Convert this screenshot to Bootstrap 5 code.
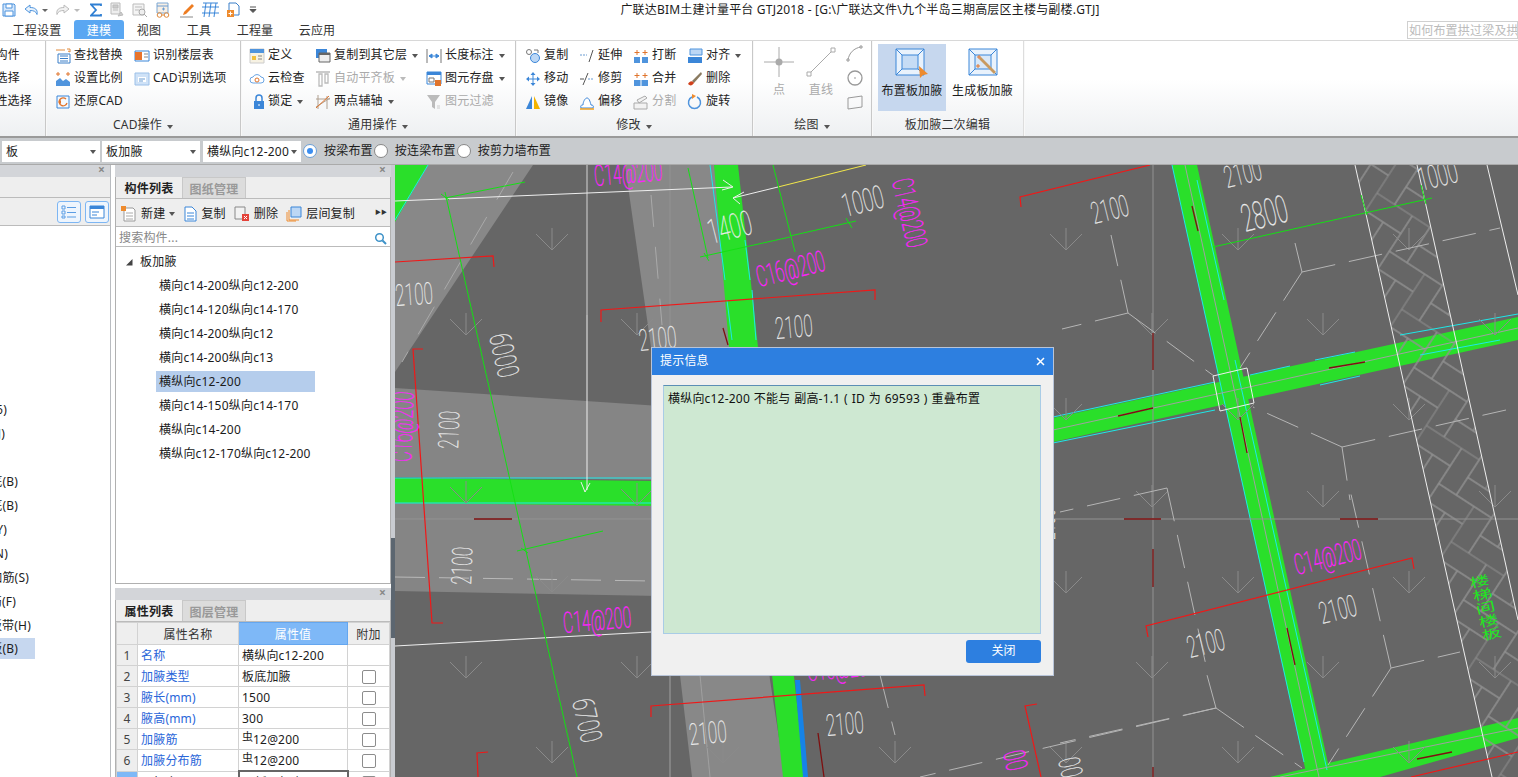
<!DOCTYPE html>
<html lang="zh">
<head>
<meta charset="UTF-8">
<title>广联达BIM土建计量平台 GTJ2018</title>
<link href="https://cdn.jsdelivr.net/npm/bootstrap@5.3.0/dist/css/bootstrap.min.css" rel="stylesheet">
<style>
html,body{height:777px;overflow:hidden}
body{position:relative;background:#fff;color:#1c1c1c;font:12px/1.2 "Noto Sans","Noto Sans CJK SC",sans-serif;letter-spacing:.2px}
svg{display:block;flex:none}
.qbar{height:20px;padding-left:2px;gap:7px}
.apptitle{position:absolute;left:0;right:0;top:3px;text-align:center;padding-left:202px;font-size:12px}
.tabbar{height:20px}
.rtab{height:19px;line-height:21px;text-align:center;color:#333}
.rtab.on{background:#5aa7f2;color:#fff;border-radius:3px 3px 0 0}
.t1{width:74px}.t2{width:50px}.t3{width:50px}.t4{width:50px}.t5{width:62px}.t6{width:62px}
.helpbox{position:absolute;left:1407px;top:21px;width:111px;height:18px;border:1px solid #d0d0d0;color:#bbb;padding:2px 0 0 1px;white-space:nowrap;overflow:hidden}
.ribbon{height:98px;border-top:1px solid #d8d8d8;border-bottom:2px solid #9a9a9a;background:linear-gradient(#fff 40%,#eef0f2)}
.rgroup{height:95px;border-right:1px solid #c8c8c8;box-shadow:1px 0 0 #f8f8f8}
.rgroup:last-child{border-right:1px solid #ddd}
.rbody{height:77px;padding-top:3px}
.rfoot{height:18px;text-align:center;color:#333}
.g1{width:46px}.g2{width:195px}.g3{width:275px}.g4{width:237px}.g5{width:119px}.g6{width:152px}
.g2 .rbody{padding-left:9px}.g3 .rbody{padding-left:8px}.g4 .rbody{padding-left:9px}.g5 .rbody{padding-left:5px}.g6 .rbody{padding-left:6px}
.c54{width:54px}.c66{width:66px}.c79{width:79px}.c111{width:111px}
.ritem{height:23px;gap:3px;white-space:nowrap;color:#222}
.ritem.off,.rbig.off{color:#aaa}
.shift{padding-left:4px;gap:3px}
.cut{height:23px;line-height:22px;overflow:hidden;white-space:nowrap;text-align:right;direction:rtl}
.e20{width:20px}.e32{width:32px}
.caret{width:0;height:0;border:3.5px solid transparent;border-top:4px solid #555;border-bottom:0;margin-left:5px;display:inline-block}
.caret.off{border-top-color:#bbb}
.ritem .caret{margin-left:2px}
.rbig{height:67px;padding-top:3px;text-align:center;white-space:nowrap}
.rbig.on{background:#c6d7ee}
.biglabel{padding-top:6px}
.bw29{width:42px}.bw68{width:68px}.bw73{width:73px}
.smallicons{padding-top:1px}
.smallicons svg+svg{margin-top:6px}
.optbar{height:27px;background:#c8cbce;border-bottom:1px solid #aaa;padding:3px 0 0 2px}
.pick{height:21px;width:98px;background:#fff;margin-right:2px;padding:1px 4px 0;justify-content:space-between}
.pick:nth-child(2){margin-right:3px}
.rd{width:14px;height:14px;border-radius:50%;border:1px solid #888;background:#fff;flex:none;position:relative}
.rd.sel{border-color:#6a9fd8}
.rd.sel::after{content:"";position:absolute;left:3px;top:3px;width:6px;height:6px;border-radius:50%;background:#3c8ef0}
.rdlabel{padding:1px 1px 0 7px;white-space:nowrap}
.work{height:612px}
.sidel{width:111px;border-right:1px solid #b9bcc0}
.sidem{width:276px;margin-left:4px}
.splitter{width:4px;background:#c9ccd1}
.splitter i{display:block;height:100px;margin-top:373px;background:#5c6670}
.ptitle{height:12px;background:#d3d5d9;position:relative}
.ptitle span{position:absolute;right:5px;top:-2px;font-size:12px;color:#888;font-weight:700}
.lrow{height:21px;background:#eee;border-bottom:1px solid #bbb}
.ltool{height:28px;background:#eee;border-bottom:1px solid #bbb;padding:3px 1px 0 0;gap:4px}
.tglbtn{width:24px;height:22px;border:1px solid #7db6f3;border-radius:3px;background:#eef5fd}
.llist{padding-top:172px}
.litem{height:24px;line-height:24px;overflow:hidden;white-space:nowrap;direction:rtl}
.litem.sel{width:35px;background:#c6d7ef;height:21px;line-height:22px}
.litem.sel span{margin-right:auto;overflow:hidden}
.e5{width:5px}.e7{width:7px}.e8{width:8px}.e16{width:16px}.e18{width:18px}.e29{width:29px}.e31{width:31px}.e35{width:35px}
.ptabs{height:22px;background:#eee;border-bottom:1px solid #bbb;padding-left:1px}
.ptab{width:64px;height:21px;line-height:24px;text-align:center;font-weight:700;color:#222}
.ptab.idle{background:#dcdcdc;color:#999;border:1px solid #c8c8c8;border-bottom:0;margin-left:1px;font-weight:700}
.toolrow{height:28px;background:#eee;border-bottom:1px solid #bbb;padding:3px 0 0 5px;white-space:nowrap;position:relative}
.tb{gap:4px;margin-right:8px}
.tb .caret{margin-left:0}
.more{position:absolute;right:3px;top:10px;font-size:6px;letter-spacing:0;color:#333}
.searchrow{height:20px;padding:3px 3px 0;color:#888;border-bottom:1px solid #bbb;justify-content:space-between}
.treebox{height:337px;border:1px solid #b0b0b0;border-top:0;padding-top:3px;margin-bottom:4px}
.upper{border-left:1px solid #b0b0b0;border-right:1px solid #b0b0b0}
.treeitem{height:24px;padding-left:43px;line-height:24px}
.treeroot{padding-left:10px;gap:7px}
.treeitem.sel{padding-top:1px}
.treeitem.sel span{display:block;width:159px;height:21px;margin-left:-3px;padding-left:3px;line-height:21px;background:#b5cdec}
.proptab{width:100%;border-collapse:collapse;table-layout:fixed;margin:0}
.proptab td,.proptab th{height:21px;padding:1px 3px 0;border:1px solid #d2d2d2;font-weight:400;white-space:nowrap;overflow:hidden;line-height:19px}
.proptab th{text-align:center;background:#eee;color:#333;padding-top:2px}
.proptab .valh{background:#7eb8f7;color:#fff;border:1px solid #64a6ef}
.proptab .num{text-align:center;background:#eee;color:#444}
.proptab .numon{background:#7eb8f7}
.proptab .bl{color:#2a66d9;padding-left:3px}
.proptab .cur{border:2px solid #666}
.bw{width:21px}.nw{width:101px}.vw{width:109px}
.cbx{display:block;width:14px;height:14px;margin:0 auto;border:1px solid #8c8c8c;border-radius:2px;background:#fff}
.steel{font-size:11px;line-height:0;vertical-align:3px;letter-spacing:0}
.canvas{flex:1;background:#666;overflow:hidden}
.dim{font-family:Roboto,"Liberation Sans",sans-serif;font-weight:100;font-size:20px;fill:#ececec;stroke:#ececec;stroke-width:.18}
.mg{font-family:Roboto,"Liberation Sans",sans-serif;font-weight:100;font-size:20px;fill:#ff1eff;stroke:#ff1eff;stroke-width:.35}
.gt{font-family:"Noto Sans CJK SC",sans-serif;font-size:14px;fill:#22e622}
.msgdlg{position:absolute;left:651px;top:347px;width:403px;height:329px;background:#f0f0f0;border:1px solid #b8c4d8}
.msghead{height:27px;background:#2d7fe0;color:#fff;padding:0 8px}
.msgbody{margin:10px 12px 6px 11px;height:249px;background:#cee8d2;border:1px solid #a9cce6;border-top-color:#5b8fb5;padding:6px 4px 4px;color:#111;word-spacing:.5px}
.closebtn{width:75px;height:23px;background:#2d7fe0;color:#fff;border:0;border-radius:3px;font-size:12px;margin-right:12px;padding:0}
</style>
</head>
<body>
<!-- quick access bar -->
<div class="qbar d-flex align-items-center">
  <svg width="14" height="14" viewBox="0 0 14 14"><path d="M1 1h11l1 1v11H1z" fill="#d5e7fb" stroke="#4f94dd"/><path d="M4 1h6v4H4zM3 8h8v5H3z" fill="#fff" stroke="#4f94dd"/></svg>
  <svg width="25" height="14" viewBox="0 0 25 14"><path d="M7 2L2 6l5 4V7.500c4 0 6 1 7 4 1-5-2-7-7-7z" fill="#e8f2fc" stroke="#4f94dd"/><path d="M19 6h6l-3 3z" fill="#666"/></svg>
  <svg width="28" height="14" viewBox="0 0 28 14"><path d="M9 2l5 4-5 4V7.500c-4 0-6 1-7 4-1-5 2-7 7-7z" fill="#f2f2f2" stroke="#bbb"/><path d="M19 6h6l-3 3z" fill="#bbb"/></svg>
  <svg width="12" height="14" viewBox="0 0 12 14"><path d="M11 3V1.500H1L6 7l-5 5.500h10V11" fill="none" stroke="#2f7fd3" stroke-width="1.800"/></svg>
  <svg width="16" height="16" viewBox="0 0 16 16"><path d="M2 1h9v11H2z" fill="#eee" stroke="#bbb"/><path d="M4 3h5v3H4zM4 8h5M9 14l5-1-2-3z" fill="#ccc" stroke="#bbb"/></svg>
  <svg width="16" height="16" viewBox="0 0 16 16"><path d="M1 2h11v11H1z" fill="#f4f4f4" stroke="#bbb"/><path d="M3 5h7M3 8h4" stroke="#bbb"/><circle cx="10" cy="10" r="3" fill="#eee" stroke="#aaa"/><path d="M12 12l3 3" stroke="#aaa"/></svg>
  <svg width="17" height="16" viewBox="0 0 17 16"><path d="M2 1h11v10H2z" fill="#f8efe4" stroke="#7da8d4"/><path d="M2 4h11M7 7h3M8.500 5.500v3" stroke="#6a9cd2" fill="none"/><circle cx="4.500" cy="13" r="2.300" fill="none" stroke="#e08a3c"/><circle cx="11.500" cy="13" r="2.300" fill="none" stroke="#e08a3c"/><path d="M7 13h2" stroke="#e08a3c"/></svg>
  <svg width="16" height="16" viewBox="0 0 16 16"><path d="M5 10L13 2l2 2-8 8-3 1z" fill="#ee7d22"/><path d="M1 15h13" stroke="#888"/></svg>
  <svg width="17" height="16" viewBox="0 0 17 16"><path d="M4 1L2 15M9 1L7 15M14 1l-2 14M0 5h17M0 11h17M1 1h15" fill="none" stroke="#3b86d8"/></svg>
  <svg width="16" height="16" viewBox="0 0 16 16"><path d="M3 1h7l3 3v9H3z" fill="#fff" stroke="#3b7fc8"/><path d="M1 8h7v7H1z" fill="#ee8b2e"/><path d="M4.500 9.500v4M2.500 11.500h4" stroke="#fff"/></svg>
  <svg width="8" height="10" viewBox="0 0 8 10"><path d="M1 2h6M1 4.500h6l-3 3z" stroke="#555" fill="#555"/></svg>
</div>
<div class="apptitle">广联达BIM土建计量平台 GTJ2018 - [G:\广联达文件\九个半岛三期高层区主楼与副楼.GTJ]</div>

<!-- ribbon tabs -->
<div class="tabbar d-flex">
  <div class="rtab t1">工程设置</div>
  <div class="rtab t2 on">建模</div>
  <div class="rtab t3">视图</div>
  <div class="rtab t4">工具</div>
  <div class="rtab t5">工程量</div>
  <div class="rtab t6">云应用</div>
</div>
<div class="helpbox">如何布置拱过梁及拱板</div>

<!-- ribbon -->
<div class="ribbon d-flex">
  <div class="rgroup g1">
    <div class="rbody">
      <div class="cut e20">构件</div>
      <div class="cut e20">选择</div>
      <div class="cut e32">性选择</div>
    </div>
  </div>
  <div class="rgroup g2">
    <div class="rbody d-flex">
      <div class="c79">
        <div class="ritem d-flex align-items-center"><svg width="16" height="16" viewBox="0 0 16 16"><path d="M1 2h9M12 1h3v3l-2-1" fill="none" stroke="#e08a3c"/><path d="M3 6h12v9H3z" fill="#fff" stroke="#3b7fc8"/><path d="M5 8h8M5 10.500h8M5 13h8" stroke="#3b7fc8"/></svg>查找替换</div>
        <div class="ritem d-flex align-items-center"><svg width="16" height="16" viewBox="0 0 16 16"><path d="M1 15V10l4-3 3 3 3-2 4 3v4z" fill="#4f94dd"/><path d="M1 3h4M11 3h4M3 1v4M13 1v4" stroke="#e0742c"/></svg>设置比例</div>
        <div class="ritem d-flex align-items-center"><svg width="16" height="16" viewBox="0 0 16 16"><path d="M2 2h12v12H2z" fill="#f4f9fe" stroke="#3b86d8"/><path d="M11 5a4 4 0 1 0 1 4" fill="none" stroke="#e0742c" stroke-width="1.300"/><path d="M3 8l3-2v4z" fill="#e0742c"/></svg>还原CAD</div>
      </div>
      <div>
        <div class="ritem d-flex align-items-center"><svg width="16" height="16" viewBox="0 0 16 16"><path d="M1 3h14v10H1z" fill="#fff" stroke="#3b86d8"/><path d="M1 4h7v8H1z" fill="#e8742c"/><path d="M10 6h4M10 9h4" stroke="#888"/></svg>识别楼层表</div>
        <div class="ritem d-flex align-items-center"><svg width="16" height="16" viewBox="0 0 16 16"><path d="M1 2h14v12H1z" fill="#cfe2f7" stroke="#9cc0e8"/><path d="M4 6h8v5H4z" fill="#fff"/><path d="M5 8h6M5 10h4" stroke="#6a9cd2"/></svg>CAD识别选项</div>
      </div>
    </div>
    <div class="rfoot">CAD操作<span class="caret"></span></div>
  </div>
  <div class="rgroup g3">
    <div class="rbody d-flex">
      <div class="c66">
        <div class="ritem d-flex align-items-center"><svg width="16" height="16" viewBox="0 0 16 16"><path d="M1 1h14v14H1z" fill="#f7f2e3" stroke="#ccc"/><path d="M1 1h14v4H1z" fill="#4f94dd"/><path d="M3 8h4v4H3z" fill="#f0c040"/><path d="M9 8h4M9 11h4" stroke="#888"/></svg>定义</div>
        <div class="ritem d-flex align-items-center"><svg width="16" height="16" viewBox="0 0 16 16"><path d="M4 12a3 3 0 0 1 0-6 4.500 4.500 0 0 1 8 0 3 3 0 0 1 0 6z" fill="#fff" stroke="#6aa5e4"/><circle cx="8" cy="9" r="2" fill="none" stroke="#e0742c"/></svg>云检查</div>
        <div class="ritem shift d-flex align-items-center"><svg width="12" height="16" viewBox="0 0 12 16"><path d="M3 7V4a3 3 0 0 1 6 0v3" fill="none" stroke="#3b86d8" stroke-width="1.500"/><path d="M1 7h10v8H1z" fill="#3b86d8"/><path d="M6 10v2" stroke="#fff"/></svg>锁定<span class="caret"></span></div>
      </div>
      <div class="c111">
        <div class="ritem d-flex align-items-center"><svg width="16" height="16" viewBox="0 0 16 16"><path d="M1 1h11v9H1z" fill="#3b86d8"/><path d="M4 5h11v9H4z" fill="#eee" stroke="#666"/><path d="M4 5h11v2H4z" fill="#666"/></svg>复制到其它层<span class="caret"></span></div>
        <div class="ritem off d-flex align-items-center"><svg width="16" height="16" viewBox="0 0 16 16"><path d="M1 1h14M4 3h3v12H4zM10 3h3v9h-3z" fill="none" stroke="#bbb" stroke-width="1.300"/></svg>自动平齐板<span class="caret off"></span></div>
        <div class="ritem d-flex align-items-center"><svg width="16" height="16" viewBox="0 0 16 16"><path d="M1 13L15 4M3 1v14M1 5h14M12 2v13" fill="none" stroke="#b0a090"/><path d="M1 14L14 2" stroke="#e0742c"/></svg>两点辅轴<span class="caret"></span></div>
      </div>
      <div>
        <div class="ritem d-flex align-items-center"><svg width="16" height="16" viewBox="0 0 16 16"><path d="M1 1v14M15 1v14" stroke="#777"/><path d="M3 8h10M3 8l3-2v4zM13 8l-3-2v4z" fill="#3b86d8" stroke="#3b86d8"/></svg>长度标注<span class="caret"></span></div>
        <div class="ritem d-flex align-items-center"><svg width="16" height="16" viewBox="0 0 16 16"><path d="M1 1h14v12H1z" fill="#fff" stroke="#3b86d8"/><path d="M1 1h14v3H1z" fill="#3b86d8"/><path d="M3 7h5v4H3z" fill="none" stroke="#777"/><path d="M9 9h6v6H9z" fill="#e0742c"/></svg>图元存盘<span class="caret"></span></div>
        <div class="ritem off d-flex align-items-center"><svg width="16" height="16" viewBox="0 0 16 16"><path d="M1 1h13L9 8v7L6 13V8z" fill="#bbb"/><path d="M11 12h3M11 14h3" stroke="#ccc"/></svg>图元过滤</div>
      </div>
    </div>
    <div class="rfoot">通用操作<span class="caret"></span></div>
  </div>
  <div class="rgroup g4">
    <div class="rbody d-flex">
      <div class="c54">
        <div class="ritem d-flex align-items-center"><svg width="16" height="16" viewBox="0 0 16 16"><circle cx="4" cy="4" r="2.500" fill="none" stroke="#777"/><circle cx="10" cy="10" r="4.500" fill="#bcd7f5" stroke="#3b86d8"/><path d="M9 2h4v3" fill="none" stroke="#777"/></svg>复制</div>
        <div class="ritem d-flex align-items-center"><svg width="16" height="16" viewBox="0 0 16 16"><path d="M8 1L5.500 4h5zM8 15l-2.500-3h5zM1 8l3-2.500v5zM15 8l-3-2.500v5z" fill="#3b86d8"/><path d="M8 4v8M4 8h8" stroke="#3b86d8"/></svg>移动</div>
        <div class="ritem d-flex align-items-center"><svg width="16" height="16" viewBox="0 0 16 16"><path d="M7 2v13H1z" fill="#3b86d8"/><path d="M9 2v13h6z" fill="#f4b400"/></svg>镜像</div>
      </div>
      <div class="c54">
        <div class="ritem d-flex align-items-center"><svg width="16" height="16" viewBox="0 0 16 16"><path d="M1 7h7" stroke="#6a9cd2" stroke-dasharray="2 1"/><path d="M10 14l4-12" stroke="#555"/></svg>延伸</div>
        <div class="ritem d-flex align-items-center"><svg width="16" height="16" viewBox="0 0 16 16"><path d="M1 8h4" stroke="#555"/><path d="M9 8h6" stroke="#6a9cd2" stroke-dasharray="2 1"/><path d="M4 14l5-12" stroke="#555"/></svg>修剪</div>
        <div class="ritem d-flex align-items-center"><svg width="16" height="16" viewBox="0 0 16 16"><path d="M2 14c-1-3 1-3 2-3 0-3 2-7 4-7s3 3 4 7c2 0 3 1 2 3z" fill="#fff" stroke="#3b86d8"/><path d="M1 15h14" stroke="#f0a020" stroke-width="1.500"/></svg>偏移</div>
      </div>
      <div class="c54">
        <div class="ritem d-flex align-items-center"><svg width="16" height="16" viewBox="0 0 16 16"><path d="M1 9h6v6H1zM9 9h6v6H9z" fill="#4f94dd"/><path d="M4 2v5M1.500 4.500h5M12 2v5M9.500 4.500h5" stroke="#e0742c"/></svg>打断</div>
        <div class="ritem d-flex align-items-center"><svg width="16" height="16" viewBox="0 0 16 16"><path d="M1 9h14v6H1z" fill="#4f94dd"/><path d="M8 9v6" stroke="#fff"/><path d="M4 2v5M1.500 4.500h5M12 2v5M9.500 4.500h5" stroke="#e0742c"/></svg>合并</div>
        <div class="ritem off d-flex align-items-center"><svg width="16" height="16" viewBox="0 0 16 16"><path d="M1 9h13v6H1zM4 6l8-4 2 2-8 5z" fill="#f2f2f2" stroke="#aaa"/></svg>分割</div>
      </div>
      <div>
        <div class="ritem d-flex align-items-center"><svg width="16" height="16" viewBox="0 0 16 16"><path d="M3 1h12v6H3z" fill="#bcd7f5" stroke="#4f94dd"/><path d="M1 9h14v6H1z" fill="#3b86d8"/></svg>对齐<span class="caret"></span></div>
        <div class="ritem d-flex align-items-center"><svg width="16" height="16" viewBox="0 0 16 16"><path d="M5 10L14 1l1 2-8 9z" fill="#8a7a60"/><path d="M1 13c2-4 5-3 6-1-2 3-4 3-6 1z" fill="#d0401c"/></svg>删除</div>
        <div class="ritem d-flex align-items-center"><svg width="16" height="16" viewBox="0 0 16 16"><path d="M10 3a6 6 0 1 1-5 0" fill="none" stroke="#4f94dd" stroke-width="1.500"/><path d="M5 0l4 2-4 3z" fill="#ee8b2e"/></svg>旋转</div>
      </div>
    </div>
    <div class="rfoot">修改<span class="caret"></span></div>
  </div>
  <div class="rgroup g5">
    <div class="rbody d-flex">
      <div class="rbig off bw29">
        <svg class="mx-auto" width="30" height="30" viewBox="0 0 30 30"><path d="M15 0v30M0 15h30" stroke="#aaa"/><circle cx="15" cy="15" r="3.500" fill="#aaa"/></svg>
        <div class="biglabel">点</div>
      </div>
      <div class="rbig off bw29">
        <svg class="mx-auto" width="30" height="30" viewBox="0 0 30 30"><path d="M3 27L27 3" stroke="#aaa"/><path d="M1 25h4v4H1zM25 1h4v4h-4z" fill="#fff" stroke="#aaa"/></svg>
        <div class="biglabel">直线</div>
      </div>
      <div class="ps-1 smallicons">
        <svg width="18" height="18" viewBox="0 0 18 18"><path d="M2 15C3 8 8 3 15 2" fill="none" stroke="#999"/><path d="M1 14h2v2H1zM14 1h2v2h-2z" fill="#fff" stroke="#999"/></svg>
        <svg width="18" height="18" viewBox="0 0 18 18"><circle cx="9" cy="9" r="7" fill="#fff" stroke="#999" stroke-width="1.300"/><path d="M8 9h2" stroke="#999"/></svg>
        <svg width="18" height="18" viewBox="0 0 18 18"><path d="M2 5l14-2v11L2 16z" fill="none" stroke="#999"/></svg>
      </div>
    </div>
    <div class="rfoot">绘图<span class="caret"></span></div>
  </div>
  <div class="rgroup g6">
    <div class="rbody d-flex">
      <div class="rbig on bw68">
        <svg class="mx-auto" width="34" height="31" viewBox="0 0 34 31"><path d="M1 2h28v26H1z" fill="#e9f2fc" stroke="#3b86d8"/><path d="M7 8h16v14H7z" fill="#c6dcf5" stroke="#3b86d8"/><path d="M1 2l6 6M29 2l-6 6M1 28l6-6M29 28l-6-6" stroke="#3b86d8"/><path d="M24 19l9 8-5 1-3 3z" fill="#ee8b2e"/></svg>
        <div class="biglabel">布置板加腋</div>
      </div>
      <div class="rbig bw73">
        <svg class="mx-auto" width="34" height="31" viewBox="0 0 34 31"><path d="M3 2h28v26H3z" fill="#e9f2fc" stroke="#3b86d8"/><path d="M3 2l6 6M31 2l-6 6M3 28l6-6M31 28l-6-6" stroke="#3b86d8"/><path d="M9 8h16v14H9z" fill="#d9e8f8" stroke="#3b86d8"/><path d="M15 10l15 15-2 2-15-15z" fill="#c89a60"/><path d="M13 8v4M11 10h4M12 17v4M10 19h4" stroke="#e0742c"/></svg>
        <div class="biglabel">生成板加腋</div>
      </div>
    </div>
    <div class="rfoot">板加腋二次编辑</div>
  </div>
</div>

<!-- options bar -->
<div class="optbar d-flex">
  <div class="pick d-flex align-items-center">板<span class="caret"></span></div>
  <div class="pick d-flex align-items-center">板加腋<span class="caret"></span></div>
  <div class="pick d-flex align-items-center text-nowrap">横纵向c12-200<span class="caret m-0"></span></div>
  <div class="d-flex align-items-center pb-1 ps-0">
    <span class="rd sel"></span><span class="rdlabel">按梁布置</span>
    <span class="rd"></span><span class="rdlabel">按连梁布置</span>
    <span class="rd"></span><span class="rdlabel">按剪力墙布置</span>
  </div>
</div>

<!-- work area -->
<div class="work d-flex">
  <div class="sidel">
    <div class="ptitle"><span>×</span></div>
    <div class="lrow"></div>
    <div class="ltool d-flex justify-content-end">
      <div class="tglbtn d-flex align-items-center justify-content-center"><svg width="16" height="14" viewBox="0 0 16 14"><path d="M1 1h3v3H1zM1 6h3v3H1zM1 11h3v2H1z" fill="none" stroke="#5b9de4"/><path d="M6 2.500h9M6 7.500h9M6 12h9" stroke="#5b9de4"/></svg></div>
      <div class="tglbtn d-flex align-items-center justify-content-center"><svg width="16" height="14" viewBox="0 0 16 14"><path d="M1 1h14v12H1z" fill="#fff" stroke="#3b86d8"/><path d="M1 1h14v3H1z" fill="#3b86d8"/><path d="M3 7h7M3 10h5" stroke="#3b86d8"/></svg></div>
    </div>
    <div class="llist">
      <div class="litem e7">(6)</div>
      <div class="litem e5">(J)</div>
      <div class="litem e5">&nbsp;</div>
      <div class="litem e18">底(B)</div>
      <div class="litem e18">底(B)</div>
      <div class="litem e7">(Y)</div>
      <div class="litem e8">(N)</div>
      <div class="litem e29">加筋(S)</div>
      <div class="litem e16">筋(F)</div>
      <div class="litem e31">板带(H)</div>
      <div class="litem sel"><span class="d-block e18">板(B)</span></div>
    </div>
  </div>

  <div class="sidem">
    <div class="ptitle"><span>×</span></div>
    <div class="upper">
      <div class="ptabs d-flex"><div class="ptab">构件列表</div><div class="ptab idle">图纸管理</div></div>
      <div class="toolrow d-flex align-items-center">
        <div class="tb d-flex align-items-center"><svg width="16" height="16" viewBox="0 0 16 16"><path d="M3 2h9l2 2v11H3z" fill="#fff" stroke="#999"/><path d="M5 7h7M5 10h7M5 13h7" stroke="#aaa"/><path d="M0 0h5v5H0z" fill="#ee8b2e"/></svg>新建<span class="caret"></span></div>
        <div class="tb d-flex align-items-center"><svg width="14" height="16" viewBox="0 0 14 16"><path d="M2 1h7l4 4v10H2z" fill="#fff" stroke="#3b86d8"/><path d="M4 7h7M4 10h7M4 13h7" stroke="#3b86d8"/></svg>复制</div>
        <div class="tb d-flex align-items-center"><svg width="16" height="16" viewBox="0 0 16 16"><path d="M1 1h10v12H1z" fill="#f2f2f2" stroke="#888"/><path d="M8 8h7v7H8z" fill="#e4433a"/><path d="M10 10l3 3M13 10l-3 3" stroke="#fff"/></svg>删除</div>
        <div class="tb d-flex align-items-center"><svg width="16" height="16" viewBox="0 0 16 16"><path d="M5 1h10v10H5z" fill="#bcd7f5" stroke="#3b86d8"/><path d="M3 4v10h10M1 6v9h9" fill="none" stroke="#ee8b2e"/></svg>层间复制</div>
        <span class="more">▶▶</span>
      </div>
      <div class="searchrow d-flex align-items-center">搜索构件...<svg width="13" height="13" viewBox="0 0 13 13"><circle cx="5.500" cy="5.500" r="3.800" fill="none" stroke="#3e92c8" stroke-width="1.500"/><path d="M8.500 8.500l3.500 3.500" stroke="#3e92c8" stroke-width="2"/></svg></div>
    </div>
    <div class="treebox">
      <div class="treeitem treeroot d-flex align-items-center"><svg width="7" height="7" viewBox="0 0 7 7"><path d="M0 6.500h6.500V0z" fill="#444"/></svg>板加腋</div>
      <div class="treeitem">横向c14-200纵向c12-200</div>
      <div class="treeitem">横向c14-120纵向c14-170</div>
      <div class="treeitem">横向c14-200纵向c12</div>
      <div class="treeitem">横向c14-200纵向c13</div>
      <div class="treeitem sel"><span>横纵向c12-200</span></div>
      <div class="treeitem">横向c14-150纵向c14-170</div>
      <div class="treeitem">横纵向c14-200</div>
      <div class="treeitem">横纵向c12-170纵向c12-200</div>
    </div>
    <div class="ptitle"><span>×</span></div>
    <div class="upper">
      <div class="ptabs d-flex"><div class="ptab">属性列表</div><div class="ptab idle">图层管理</div></div>
      <table class="proptab">
        <colgroup><col class="bw"><col class="nw"><col class="vw"><col></colgroup>
        <tr><th></th><th>属性名称</th><th class="valh">属性值</th><th>附加</th></tr>
        <tr><td class="num">1</td><td class="bl">名称</td><td>横纵向c12-200</td><td></td></tr>
        <tr><td class="num">2</td><td class="bl">加腋类型</td><td>板底加腋</td><td><span class="cbx"></span></td></tr>
        <tr><td class="num">3</td><td class="bl">腋长(mm)</td><td>1500</td><td><span class="cbx"></span></td></tr>
        <tr><td class="num">4</td><td class="bl">腋高(mm)</td><td>300</td><td><span class="cbx"></span></td></tr>
        <tr><td class="num">5</td><td class="bl">加腋筋</td><td><span class="steel">虫</span>12@200</td><td><span class="cbx"></span></td></tr>
        <tr><td class="num">6</td><td class="bl">加腋分布筋</td><td><span class="steel">虫</span>12@200</td><td><span class="cbx"></span></td></tr>
        <tr><td class="num numon"></td><td>顶标高</td><td class="cur">顶板顶标高</td><td><span class="cbx"></span></td></tr>
      </table>
    </div>
  </div>

  <div class="splitter"><i></i></div>

  <!-- drawing canvas, coordinates are screen coordinates -->
  <div class="canvas">
    <svg width="1123" height="612" viewBox="395 165 1123 612">
      <defs>
        <g id="ar"><path d="M0-22V0M-16-16L0 0 16-16" fill="none" stroke="#8a8a8a" stroke-width="1"/></g>
        <pattern id="hb" width="84" height="84" patternUnits="userSpaceOnUse" patternTransform="rotate(33)">
          <g fill="none" stroke="#909090" stroke-width="1">
            <rect x="0" y="0" width="42" height="21"/><rect x="21" y="63" width="42" height="21"/><rect x="42" y="42" width="42" height="21"/><rect x="63" y="21" width="42" height="21"/><rect x="-21" y="21" width="42" height="21"/>
            <rect x="42" y="0" width="21" height="42"/><rect x="63" y="63" width="21" height="42"/><rect x="63" y="-21" width="21" height="42"/><rect x="0" y="42" width="21" height="42"/><rect x="21" y="21" width="21" height="42"/>
          </g>
        </pattern>
      </defs>
      <rect x="395" y="165" width="1123" height="612" fill="#666"/>
      <!-- slab bands -->
      <path d="M395 165H533L395 372z" fill="#888"/>
      <path d="M625 165H720L735 347 770 680 785 777H692L680 675 651 347z" fill="#888"/>
      <path d="M395 388L660 406V480L395 477z" fill="#858585"/>
      <path d="M395 503H660V596L395 591z" fill="#858585"/>
      <!-- green beams -->
      <path d="M395 165H428L395 222z" fill="#2adf2a"/>
      <path d="M714 165H738L758 347 805 777H783L772 675 729 347z" fill="#2adf2a"/>
      <path d="M795 680H800L808 777H803z" fill="#1683e8"/>
      <path d="M395 478L660 481V506L395 503z" fill="#2adf2a"/>
      <path d="M1053 418L1518 317V340L1053 442z" fill="#2adf2a"/>
      <path d="M1172 165H1197L1331 777H1307z" fill="#2adf2a"/>
      <path d="M1270 777L1518 718V738L1380 777z" fill="#2adf2a"/>
      <!-- hatch -->
      <path d="M1355 165H1417L1518 620V777H1492z" fill="url(#hb)"/>
      <!-- cyan edges -->
      <path d="M1172 165L1304 762M1197 180L1224 300M1235 360L1327 770M1053 417L1215 382M1250 375L1290 366M1315 360L1355 352M1400 335L1518 314M1053 443L1215 410M1320 385L1360 376M1420 355L1500 340M710 165L725 280M745 240L750 280M395 478H660M395 503H660M727 300L732 340M752 290L756 340M395 220L428 165" fill="none" stroke="#1ee8e8" stroke-width="1"/>
      <!-- gray centre and grid lines -->
      <path d="M1185 165L1319 777M1053 430L1518 328M1280 777L1518 728" fill="none" stroke="#a0a0a0" stroke-width="1"/>
      <path d="M1153 165V777M1053 519H1518M395 519H651M670 165V330" fill="none" stroke="#929292" stroke-width="1"/>
      <path d="M587 165V315" stroke="#b0b0b0" stroke-width="1.500"/>
      <path d="M395 577L651 581" fill="none" stroke="#b9b9b9" stroke-dasharray="30 14" stroke-width="1"/>
      <path d="M513 172L402 362M651 195L662 325" fill="none" stroke="#aaa" stroke-dasharray="32 20" stroke-width="1"/>
      <path d="M670 675V777M700 675L710 777" fill="none" stroke="#a0a0a0"/>
      <!-- arrows -->
      <use href="#ar" x="552" y="250"/><use href="#ar" x="466" y="335"/><use href="#ar" x="637" y="335"/><use href="#ar" x="466" y="503"/><use href="#ar" x="637" y="505"/><use href="#ar" x="552" y="592"/><use href="#ar" x="466" y="678"/><use href="#ar" x="637" y="678"/><use href="#ar" x="552" y="763"/><use href="#ar" x="723" y="763"/><use href="#ar" x="895" y="763"/><use href="#ar" x="1152" y="678"/>
      <use href="#ar" x="1066" y="250"/><use href="#ar" x="1238" y="250"/><use href="#ar" x="1409" y="250"/><use href="#ar" x="1152" y="335"/><use href="#ar" x="1323" y="335"/><use href="#ar" x="1495" y="335"/><use href="#ar" x="1066" y="420"/><use href="#ar" x="1238" y="420"/><use href="#ar" x="1409" y="420"/><use href="#ar" x="1152" y="507"/><use href="#ar" x="1323" y="507"/><use href="#ar" x="1495" y="507"/><use href="#ar" x="1066" y="593"/><use href="#ar" x="1238" y="593"/><use href="#ar" x="1409" y="593"/><use href="#ar" x="1323" y="678"/><use href="#ar" x="1495" y="678"/><use href="#ar" x="1066" y="763"/><use href="#ar" x="1238" y="763"/><use href="#ar" x="1409" y="763"/>
      <!-- dashed slab yield lines -->
      <g fill="none" stroke="#b5b5b5" stroke-width="1" stroke-dasharray="34 14">
        <path d="M1128 313L1111 235M1128 313L1062 329M1128 313L1214 376"/>
        <path d="M1302 272L1295 243M1302 272L1500 228M1302 272L1240 368"/>
        <path d="M1342 447L1253 407M1342 447L1506 410M1342 447L1350 500"/>
        <path d="M1167 488L1060 512M1167 488L1207 670M1216 708L1207 675M1216 708L1060 743M1216 708L1302 768"/>
        <path d="M1391 668L1350 490M1391 668L1460 652M1391 668L1328 765"/>
        <path d="M1216 708L920 777M880 675L895 735"/>
      </g>
      <!-- white lines -->
      <g fill="none" stroke="#eee" stroke-width="1">
        <path d="M395 201L732 187M723 180L733 187 722 190"/>
        <path d="M587 315V490M581 482L585 492 590 483"/>
        <path d="M733 198L778 187M744 192L733 198 740 204"/>
        <path d="M395 646L651 632"/>
        <path d="M1355 165L1492 777M1417 165L1518 620M1487 165L1518 295"/>
        <path d="M1213 376L1247 368 1254 403 1220 411z"/>
      </g>
      <path d="M778 187L866 165" stroke="#f3e84a" stroke-width="1"/>
      <!-- green dimension lines -->
      <g fill="none" stroke="#14e014" stroke-width="1">
        <path d="M445 192L577 777M445 198L525 182M517 551L603 531M521 548l7 5M441 194l8 6"/>
        <path d="M688 168L708 258M700 257L790 237M704 253l5 8M773 165L795 252M790 236L856 221M846 218l6 10"/>
        <path d="M1213 247L1432 198M1361 195L1367 215M1421 185L1426 204"/>
      </g>
      <!-- red section lines -->
      <g fill="none" stroke="#f01818" stroke-width="1.200">
        <path d="M395 262L493 256 494 267"/>
        <path d="M601 322V310L875 290V300"/>
        <path d="M423 349H413L432 623H443"/>
        <path d="M651 717V706L924 685 925 696"/>
        <path d="M478 777L477 753 488 752"/>
        <path d="M1148 637L1146 626 1412 558 1414 569"/>
        <path d="M1021 207L1020 197 1150 165"/>
        <path d="M1037 704L1025 706 1041 777M1411 777L1518 752"/>
      </g>
      <!-- dark red cuts -->
      <path d="M1124 519H1161M1340 519H1378M1153 333V370M1153 549V587M1153 767V777M1192 206L1198 231M1240 417L1247 453M1287 628L1295 665M1118 416L1153 408M1329 368L1365 362M1417 759L1452 752M474 519H512M723 328L728 345M818 733L824 777" fill="none" stroke="#7e1010" stroke-width="1.300"/>
      <!-- dimension numbers -->
      <text class="dim" transform="translate(396 306) rotate(-4) scale(.85 1.5)">2100</text>
      <text class="dim" transform="translate(640 351) rotate(-6) scale(.85 1.5)">2100</text>
      <text class="dim" transform="translate(776 339) rotate(-5) scale(.85 1.5)">2100</text>
      <text class="dim" transform="translate(1094 224) rotate(-14) scale(.85 1.5)">2100</text>
      <text class="dim" transform="translate(1227 188) rotate(-14) scale(.85 1.5)">2100</text>
      <text class="dim" transform="translate(1245 232) rotate(-14) scale(1.05 1.9)">2800</text>
      <text class="dim" transform="translate(1421 191) rotate(-14) scale(.9 1.6)">1000</text>
      <text class="dim" transform="translate(845 217) rotate(-14) scale(.95 1.6)">1000</text>
      <text class="dim" transform="translate(711 244) rotate(-14) scale(1 1.7)">1400</text>
      <text class="dim" transform="translate(489 336) rotate(77) scale(1 1.5)">6000</text>
      <text class="dim" transform="translate(572 701) rotate(77) scale(1 1.5)">6700</text>
      <text class="dim" transform="translate(471 585) rotate(-88) scale(.85 1.4)">2100</text>
      <text class="dim" transform="translate(458 449) rotate(-88) scale(.85 1.4)">2100</text>
      <text class="dim" transform="translate(690 745) rotate(-5) scale(.85 1.5)">2100</text>
      <text class="dim" transform="translate(827 736) rotate(-5) scale(.85 1.5)">2100</text>
      <text class="dim" transform="translate(1322 624) rotate(-14) scale(.85 1.5)">2100</text>
      <text class="dim" transform="translate(1190 658) rotate(-14) scale(.85 1.5)">2100</text>
      <text class="dim" transform="translate(1055 540) rotate(-90) scale(.7 1.3)">2100</text>
      <text class="dim" transform="translate(1058 760) rotate(77) scale(.9 1.5)">00</text>
      <!-- rebar labels -->
      <text class="mg" transform="translate(595 186) rotate(-5) scale(.78 1.45)">C14@200</text>
      <text class="mg" transform="translate(759 287) rotate(-14) scale(.8 1.45)">C16@200</text>
      <text class="mg" transform="translate(892 181) rotate(77) scale(.8 1.45)">C14@200</text>
      <text class="mg" transform="translate(411 462) rotate(-88) scale(.8 1.45)">C16@200</text>
      <text class="mg" transform="translate(564 633) rotate(-5) scale(.78 1.45)">C14@200</text>
      <text class="mg" transform="translate(1297 575) rotate(-14) scale(.78 1.45)">C14@200</text>
      <text class="mg" transform="translate(808 681) rotate(-5) scale(.78 1.3)">C16@200</text>
      <text class="mg" transform="translate(1003 753) rotate(77) scale(.9 1.5)">00</text>
      <text class="gt" transform="translate(1471 588) rotate(-13) scale(1.4 .9)"><tspan x="0" dy="0">楼</tspan><tspan x="0" dy="15">梯</tspan><tspan x="0" dy="15">间</tspan><tspan x="0" dy="15">楼</tspan><tspan x="0" dy="15">板</tspan></text>
    </svg>
  </div>
</div>

<!-- message dialog -->
<div class="msgdlg">
  <div class="msghead d-flex align-items-center justify-content-between"><span>提示信息</span><svg width="9" height="9" viewBox="0 0 9 9"><path d="M1 1l7 7M8 1L1 8" stroke="#fff" stroke-width="1.500"/></svg></div>
  <div class="msgbody">横纵向c12-200 不能与 副高-1.1 ( ID 为 69593 ) 重叠布置</div>
  <div class="d-flex justify-content-end"><button class="closebtn" type="button">关闭</button></div>
</div>
<script src="https://cdn.jsdelivr.net/npm/bootstrap@5.3.0/dist/js/bootstrap.bundle.min.js"></script>
</body>
</html>
